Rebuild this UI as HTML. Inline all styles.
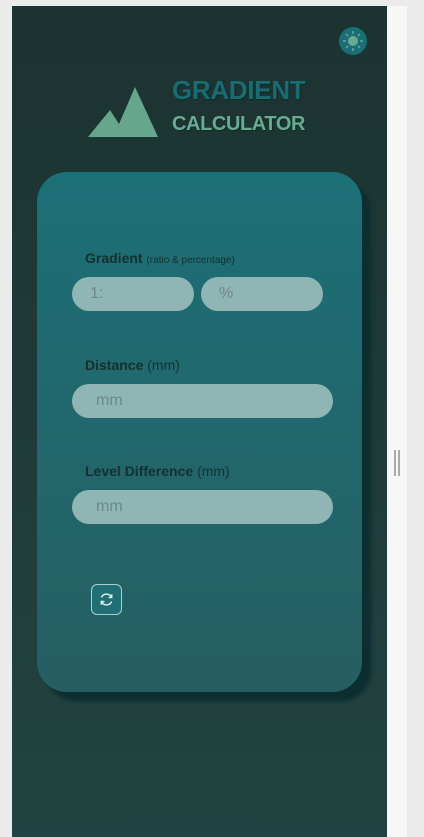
<!DOCTYPE html>
<html><head><style>
body{margin:0;width:424px;height:837px;background:#ebebeb;position:relative;overflow:hidden;font-family:"Liberation Sans",sans-serif}
.strip{position:absolute;left:387px;top:6px;width:20px;height:831px;background:#f7f7f7}
.grip{position:absolute;left:394px;top:450px;height:26px;border-left:2px solid #aaa;border-right:2px solid #aaa;width:2px}
.panel{position:absolute;left:12px;top:6px;width:375px;height:831px;background:linear-gradient(#1b3331,#224341)}
.card{position:absolute;left:25px;top:166px;width:325px;height:520px;border-radius:30px;background:linear-gradient(#1c7077,#265e62);box-shadow:9px 9px 4px #0c2e30}
.lbl{position:absolute;left:48px;color:#15302f;font-size:14px;font-weight:bold}
.lbl span{font-weight:normal}
.in{position:absolute;height:34px;border-radius:17px;background:#8fb5b5;color:#6f8888;font-size:16px;line-height:34px;padding-left:24px;box-sizing:border-box}
</style></head><body>
<div class="strip"></div><div class="grip"></div>
<div class="panel">
<svg style="position:absolute;left:326px;top:20px" width="30" height="30" viewBox="0 0 30 30"><circle cx="15" cy="15" r="14" fill="#1a6f76"/><circle cx="15" cy="15" r="5" fill="#6aaa90"/><g stroke="#6aaa90" stroke-width="1.5"><path d="M15 5v3M15 22v3M5 15h3M22 15h3M8 8l2 2M20 20l2 2M8 22l2-2M20 10l2-2"/></g></svg>
<svg style="position:absolute;left:76px;top:80px" width="72" height="52" viewBox="0 0 72 52"><path d="M0 51L22 24L31 38L47 1L70 51Z" fill="#66a68c"/></svg>
<div style="position:absolute;left:160px;top:69px;font-size:26px;font-weight:bold;color:#1a6b72;text-shadow:1px 1px 1px #0f2a2a;letter-spacing:-0.3px">GRADIENT</div>
<div style="position:absolute;left:160px;top:107px;font-size:20px;font-weight:bold;color:#6aaa90;text-shadow:1px 1px 1px #0f2a2a;letter-spacing:-0.4px">CALCULATOR</div>
<div class="card">
<div class="lbl" style="top:78px">Gradient <span style="font-size:10px">(ratio &amp; percentage)</span></div>
<div class="in" style="left:35px;top:105px;width:122px;padding-left:18px">1:</div>
<div class="in" style="left:164px;top:105px;width:122px;padding-left:18px">%</div>
<div class="lbl" style="top:185px">Distance <span>(mm)</span></div>
<div class="in" style="left:35px;top:212px;width:261px">mm</div>
<div class="lbl" style="top:291px">Level Difference <span>(mm)</span></div>
<div class="in" style="left:35px;top:318px;width:261px">mm</div>
<div style="position:absolute;left:54px;top:412px;width:31px;height:31px;box-sizing:border-box;border:1px solid #a8d0d0;border-radius:6px;background:#1f6f74"><svg width="29" height="29" viewBox="0 0 28 28"><g fill="none" stroke="#d8eeee" stroke-width="1.5"><path d="M9 12a5.5 5.5 0 0 1 10 0M19 16a5.5 5.5 0 0 1-10 0"/><path d="M19 9v3h-3M9 19v-3h3"/></g></svg></div>
</div>
</div>
</body></html>
